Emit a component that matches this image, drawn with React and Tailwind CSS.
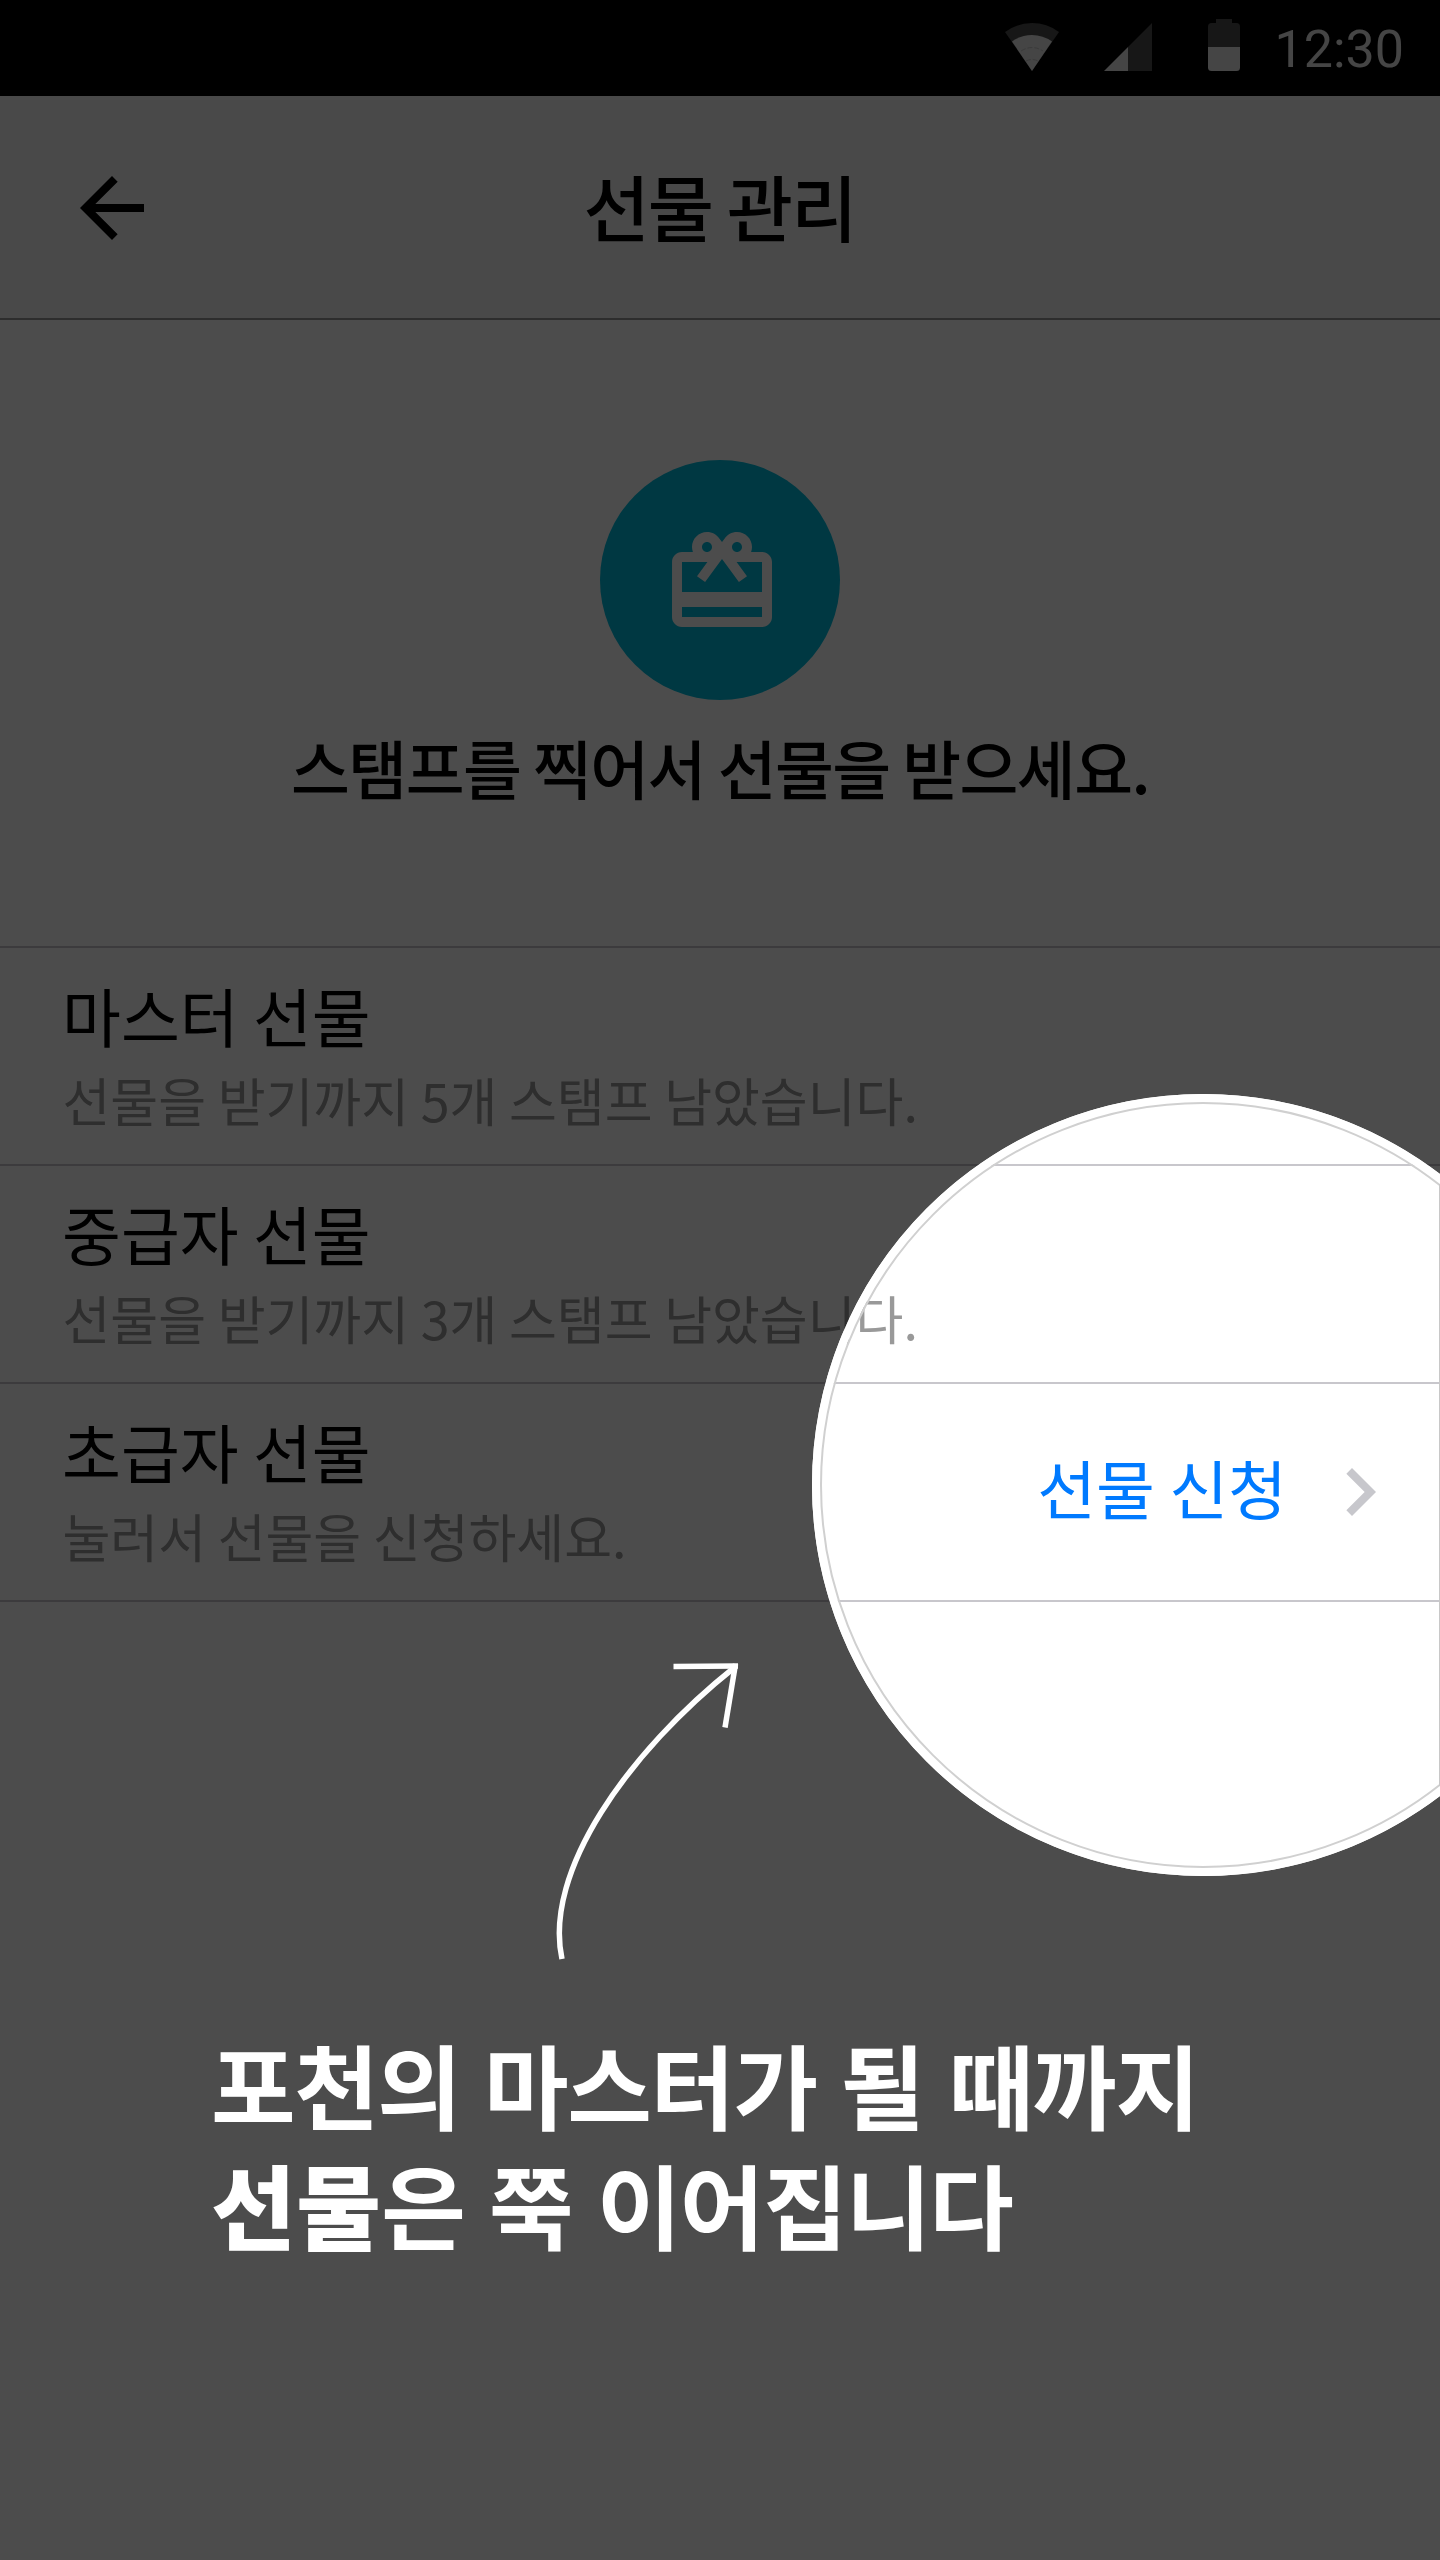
import React from 'react';

const gifts = [
  { title: '마스터 선물', note: '선물을 받기까지 5개 스탬프 남았습니다.' },
  { title: '중급자 선물', note: '선물을 받기까지 3개 스탬프 남았습니다.' },
  { title: '초급자 선물', note: '눌러서 선물을 신청하세요.', action: '선물 신청' },
];

function StatusBar() {
  return (
    <div className="flex h-24 items-start justify-end bg-black pr-9 text-[#e6e6e6]">
      <svg className="mt-[23px] mr-[45px] h-12 w-[54px]" viewBox="0 0 54 48" fill="currentColor">
        <path d="M0 9Q12 0 27 0T54 9L27 48Z" fill="#4d4d4d" />
        <path d="M7 18.5Q16 12 27 12T47 18.5L27 48Z" />
        <path d="M16 28Q27 21 38 28M21 38Q27 35 33 38" fill="none" stroke="#c4c4c4" strokeWidth="1" strokeDasharray="5 2" />
      </svg>
      <svg className="mt-[23px] mr-14 h-12 w-12" viewBox="0 0 48 48" fill="currentColor">
        <path d="M48 0V48H24V24Z" fill="#4d4d4d" />
        <path d="M24 24V48H0Z" />
      </svg>
      <svg className="mt-[19px] mr-[35px] h-[52px] w-8" viewBox="0 0 32 52" fill="currentColor">
        <path d="M8 0H24V4H28.5Q32 4 32 7.500V28H0V7.500Q0 4 3.500 4H8Z" fill="#4d4d4d" />
        <path d="M0 28H32V48.500Q32 52 28.500 52H3.500Q0 52 0 48.500Z" />
      </svg>
      <span className="pt-1 font-['Roboto',sans-serif] text-[52px] leading-[92px]">12:30</span>
    </div>
  );
}

function Header() {
  return (
    <header className="grid h-56 grid-cols-[1fr_auto_1fr] items-center border-b-2 border-[#969696] bg-[#f5f5f5] px-16">
      <svg className="mt-[2px] size-24" viewBox="0 0 24 24">
        <path d="M20 11H7.83l5.590-5.590L12 4l-8 8 8 8 1.410-1.410L7.830 13H20v-2z" />
      </svg>
      <h1 className="mr-px mb-1 text-7xl font-medium tracking-tight">선물 관리</h1>
    </header>
  );
}

function Hero() {
  return (
    <section className="flex h-[626px] flex-col items-center pt-[140px]">
      <div className="flex size-60 shrink-0 items-center justify-center rounded-full bg-[#00bcdd] pt-1 pl-1">
        <svg className="size-[120px]" viewBox="0 0 24 24" fill="#fff">
          <path d="M20 6h-2.180c.11-.31.18-.65.18-1 0-1.660-1.340-3-3-3-1.050 0-1.960.54-2.500 1.350l-.5.67-.5-.68C10.960 2.540 10.050 2 9 2 7.340 2 6 3.340 6 5c0 .35.07.69.18 1H4c-1.110 0-1.990.89-1.990 2L2 19c0 1.110.89 2 2 2h16c1.110 0 2-.89 2-2V8c0-1.110-.89-2-2-2zm-5-2c.55 0 1 .45 1 1s-.45 1-1 1-1-.45-1-1 .45-1 1-1zM9 4c.55 0 1 .45 1 1s-.45 1-1 1-1-.45-1-1 .45-1 1-1zm11 15H4v-2h16v2zm0-5H4V8h5.080L7 10.830 8.620 12 11 8.760l1-1.360 1 1.360L15.380 12 17 10.830 14.920 8H20v6z" />
        </svg>
      </div>
      <p className="mt-[18px] text-[64px] leading-[96px] font-medium tracking-tight">스탬프를 찍어서 선물을 받으세요.</p>
    </section>
  );
}

function GiftRow({ title, note, action }) {
  return (
    <li className="flex h-[218px] items-center justify-between border-t-2 border-[#c8c7cc] pr-8 pl-[62px]">
      <div className="self-start pt-[26px]">
        <p className="text-[64px] leading-[80px]">{title}</p>
        <p className="mt-[10px] pl-[0.5px] text-[52px] leading-[72px] text-[#999]">{note}</p>
      </div>
      {action && (
        <div className="flex items-center gap-[25px] text-[#007aff]">
          <span className="mb-3 text-[64px] leading-[80px]">{action}</span>
          <svg className="size-24" viewBox="0 0 24 24" fill="#c7c7cc">
            <path d="M10 6L8.590 7.410 13.170 12l-4.580 4.590L10 18l6-6z" />
          </svg>
        </div>
      )}
    </li>
  );
}

function CoachMark() {
  return (
    <div className="absolute inset-0 overflow-hidden">
      <div className="absolute top-[1094px] left-[812px] size-[782px] rounded-full border-8 border-white shadow-[0_0_0_2000px_rgba(0,0,0,0.7)]">
        <div className="size-full rounded-full border-2 border-[#d0d0d0]" />
      </div>
      <div className="absolute top-[1184px] right-0 h-[602px] w-px bg-[#c8c8c8]" />
      <svg className="absolute top-[1650px] left-[540px] h-[320px] w-[210px]" viewBox="540 1650 210 320" fill="none" stroke="#fff" strokeWidth="5.500">
        <path d="M562 1959C543 1872 628 1752 735 1667" />
        <path d="M673.500 1666.500L738 1666" />
        <path d="M735.500 1664L725 1727.500" />
      </svg>
      <p className="absolute top-[2023px] left-[211px] text-[92px] leading-[120px] font-bold tracking-[-1.5px] whitespace-nowrap text-white">
        <span className="[word-spacing:4.2px]">포천의 마스터가 될</span>
        <span className="[word-spacing:6.5px]"> 때까지</span>
        <br />
        <span className="font-black tracking-[0.5px]">선물</span>
        <span className="[word-spacing:5.2px]">은 쭉 이어집니다</span>
      </p>
    </div>
  );
}

export default function App() {
  return (
    <main className="relative h-[2560px] w-[1440px] overflow-hidden bg-white font-['Noto_Sans_CJK_KR',sans-serif] text-black">
      <StatusBar />
      <Header />
      <Hero />
      <ul className="border-b-2 border-[#c8c7cc]">
        {gifts.map((gift) => (
          <GiftRow key={gift.title} {...gift} />
        ))}
      </ul>
      <CoachMark />
    </main>
  );
}
